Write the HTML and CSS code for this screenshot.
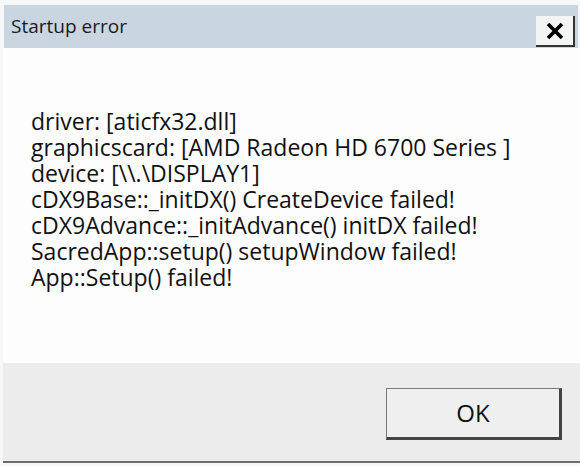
FILE: index.html
```html
<!DOCTYPE html>
<html lang="en">
<head>
    <meta charset="UTF-8">
    <title>Startup error</title>
    <link rel="stylesheet" href="styles.css">
</head>
<body>
    <div class="dialog">
        <div class="title-bar">
            <span class="title">Startup error</span>
            <button class="close-btn" aria-label="Close">
                <svg width="20" height="18" viewBox="0 0 20 18">
                    <path d="M3 2 L17 16 M17 2 L3 16" stroke="#000" stroke-width="3.6" fill="none"/>
                </svg>
            </button>
        </div>
        <div class="content">
            <p>driver: [aticfx32.dll]</p>
            <p>graphicscard: [AMD Radeon HD 6700 Series ]</p>
            <p>device: [\\.\DISPLAY1]</p>
            <p>cDX9Base::_initDX() CreateDevice failed!</p>
            <p>cDX9Advance::_initAdvance() initDX failed!</p>
            <p>SacredApp::setup() setupWindow failed!</p>
            <p>App::Setup() failed!</p>
        </div>
        <div class="footer">
            <button class="ok-btn">OK</button>
        </div>
    </div>
</body>
</html>
```

FILE: styles.css
```css
body {
    margin: 0;
    background-color: #f7f7f7;
    font-family: "Open Sans", "Noto Sans", sans-serif;
    color: #111;
}

.dialog {
    width: 577px;
    height: 463px;
    margin-left: 3px;
    padding-top: 5px;
    box-sizing: border-box;
    border-bottom: 2px solid #6c6c6c;
    display: flex;
    flex-direction: column;
}

.title-bar {
    height: 43px;
    margin-left: 1px;
    margin-right: 2px;
    background-color: #c9d6e2;
    display: flex;
    align-items: flex-start;
    justify-content: space-between;
}

.title {
    font-size: 19px;
    margin-left: 7px;
    margin-top: 8px;
    color: #1a1a1a;
}

.close-btn {
    width: 39px;
    height: 31px;
    margin-top: 11px;
    margin-right: 3px;
    padding: 0;
    background-color: #f4f4f4;
    border: none;
    border-right: 2px solid #333;
    border-bottom: 2px solid #333;
    display: flex;
    align-items: center;
    justify-content: center;
}

.content {
    height: 315px;
    background-color: #fdfdfd;
    padding: 60px 0 0 28px;
    box-sizing: border-box;
    font-size: 23px;
}

.content p {
    margin: 0;
    line-height: 26px;
}

.footer {
    flex: 1;
    background-color: #ececec;
    display: flex;
    justify-content: flex-end;
    align-items: flex-start;
}

.ok-btn {
    width: 176px;
    height: 52px;
    margin-top: 25px;
    margin-right: 18px;
    padding-top: 0;
    background-color: #efefef;
    border: 1px solid #777;
    border-right: 3px solid #444;
    border-bottom: 3px solid #444;
    font-family: "Open Sans", "Noto Sans", sans-serif;
    font-size: 24px;
    color: #111;
}
```
